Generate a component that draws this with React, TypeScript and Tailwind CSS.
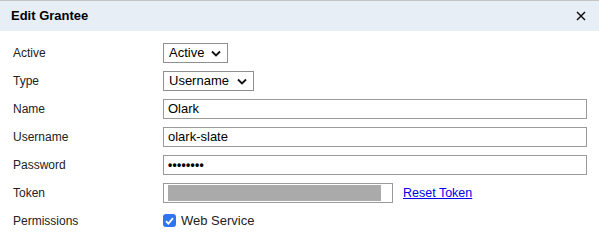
import React from 'react';

const font = { fontFamily: '"Liberation Sans", Arial, sans-serif' };

function Chevron() {
  return (
    <svg width="10" height="7" viewBox="0 0 10 7" className="shrink-0">
      <path d="M1 1.5 L5 5.5 L9 1.5" fill="none" stroke="#111" strokeWidth="1.8" />
    </svg>
  );
}

function Select({ value, width }: { value: string; width: string }) {
  return (
    <div className={`${width} h-[20px] border border-[#8f8f8f] bg-white flex items-center justify-between pl-[5px] pr-[6px] text-[13px] text-black`}>
      <span>{value}</span>
      <Chevron />
    </div>
  );
}

function TextBox({ children, className = '' }: { children?: React.ReactNode; className?: string }) {
  return (
    <div className={`h-[20px] border border-[#9a9a9a] bg-white flex items-center px-[4px] text-[13px] text-black ${className}`}>
      {children}
    </div>
  );
}

function Row({ label, children, h = 'h-[20px]' }: { label: string; children: React.ReactNode; h?: string }) {
  return (
    <div className={`grid grid-cols-[163px_1fr] items-center ${h}`}>
      <span className="pl-[13px] text-[12px] text-[#222]">{label}</span>
      <div className="flex items-center">{children}</div>
    </div>
  );
}

export default function App() {
  return (
    <div className="w-[599px] h-[243px] bg-white border-t border-[#c4c4c4]" style={font}>
      <div className="h-[30px] bg-[#e8eef5] flex items-center justify-between pl-[11px] pr-[13px]">
        <span className="text-[13px] font-bold text-black">Edit Grantee</span>
        <svg width="10" height="10" viewBox="0 0 10 10">
          <path d="M1 1 L9 9 M9 1 L1 9" stroke="#111" strokeWidth="1.5" />
        </svg>
      </div>

      <div className="flex flex-col gap-[8px] pt-[12px] pr-[12px]">
        <Row label="Active">
          <Select value="Active" width="w-[65px]" />
        </Row>
        <Row label="Type">
          <Select value="Username" width="w-[91px]" />
        </Row>
        <Row label="Name">
          <TextBox className="w-full">Olark</TextBox>
        </Row>
        <Row label="Username">
          <TextBox className="w-full">olark-slate</TextBox>
        </Row>
        <Row label="Password">
          <TextBox className="w-full">
            <span className="text-[12px] font-bold tracking-[0.3px]">••••••••</span>
          </TextBox>
        </Row>
        <Row label="Token">
          <TextBox className="w-[230px] px-[1px]">
            <div className="w-[213px] h-[16px] bg-[#aaaaaa]" />
          </TextBox>
          <a href="#" className="ml-[10px] text-[12.5px] text-[#0000ee] underline">
            Reset Token
          </a>
        </Row>
        <Row label="Permissions" h="h-[16px]">
          <div className="flex items-center gap-[5px]">
            <div className="w-[13px] h-[13px] rounded-[3px] bg-[#2f74f0] flex items-center justify-center">
              <svg width="9" height="8" viewBox="0 0 9 8">
                <path d="M1 4.2 L3.4 6.6 L8 1.2" fill="none" stroke="#fff" strokeWidth="1.8" />
              </svg>
            </div>
            <span className="text-[13px] text-[#222]">Web Service</span>
          </div>
        </Row>
      </div>
    </div>
  );
}
